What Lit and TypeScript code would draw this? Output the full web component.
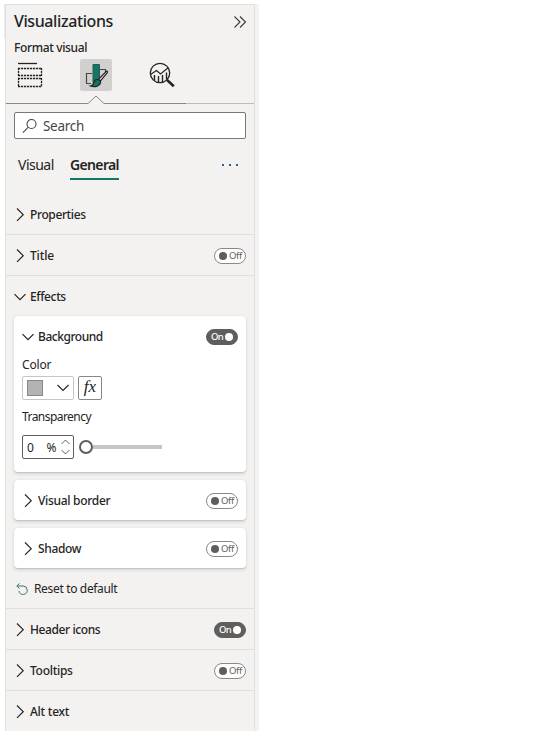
import { LitElement, html, css, svg, nothing } from "lit";
import { customElement, property } from "lit/decorators.js";

const base = css`
  :host { display: block; box-sizing: border-box; }
  * { box-sizing: border-box; }
  svg { display: block; fill: none; flex: none; }
`;

@customElement("toggle-pill")
class TogglePill extends LitElement {
  @property({ type: Boolean }) on = false;
  static styles = [base, css`
    :host { flex: none; }
    .pill {
      width: 32px; height: 16px; border-radius: 8px; border: 1px solid #8a8886;
      background: #fff; color: #605e5c; display: flex; align-items: center;
      padding: 0 3px 0 4px; gap: 2px; font-size: 9.5px; line-height: 14px;
      letter-spacing: -0.3px;
    }
    .dot { width: 8px; height: 8px; border-radius: 50%; background: #605e5c; flex: none; }
    .pill.on { background: #605e5c; border-color: #605e5c; color: #fff; font-weight: 550;
      flex-direction: row-reverse; justify-content: flex-start; padding: 0 4px 0 3px; gap: 2px; letter-spacing: -0.7px; }
    .on .dot { background: #fff; }
  `];
  render() {
    return html`<div class="pill ${this.on ? "on" : ""}"><span class="dot"></span><span>${this.on ? "On" : "Off"}</span></div>`;
  }
}

@customElement("section-row")
class SectionRow extends LitElement {
  @property() label = "";
  @property() toggle = "";
  @property({ type: Boolean }) open = false;
  @property() spacing = "0";
  static styles = [base, css`
    .row { display: flex; align-items: center; height: 40px; padding: 0 8px; }
    .chevron { width: 12px; margin-right: 4px; }
    .label { flex: 1; font-size: 12px; font-weight: 550; line-height: 16px; white-space: nowrap; }
  `];
  render() {
    return html`<div class="row">
      <svg class="chevron" width="12" height="14" viewBox="0 0 12 14" stroke="#252423" stroke-width="1.2">
        ${this.open ? svg`<path d="M.5 4.200 6 9.700l5.500-5.500"/>` : svg`<path d="M3 .500 9.200 6.700 3 12.900"/>`}
      </svg>
      <span class="label" style="letter-spacing:${this.spacing}px">${this.label}</span>
      ${this.toggle ? html`<toggle-pill ?on=${this.toggle === "on"}></toggle-pill>` : nothing}
    </div>`;
  }
}

@customElement("app-root")
class AppRoot extends LitElement {
  static styles = [base, css`
    :host {
      height: 735px; padding: 4px 0 0 5px; overflow: hidden;
      background: linear-gradient(#edebe9, #edebe9) 4px 4px / 1px 34px no-repeat #fff;
      font-family: "Noto Sans", "Open Sans", sans-serif; color: #252423;
    }
    .panel { width: 254px; height: 727px; background: #f3f2f1; overflow: hidden; }
    .pane { width: 250px; height: 727px; border: solid #e1dfdd; border-width: 1px 1px 0; }
    .head { display: flex; justify-content: space-between; align-items: center; height: 34px; padding: 0 7px 0 8px; }
    .head svg { margin-top: -1px; }
    .title { font-size: 16px; font-weight: 540; letter-spacing: -0.4px; margin-top: -2px; }
    .sub { height: 16px; margin: 0 8px; font-size: 12px; line-height: 18px; font-weight: 500; letter-spacing: -0.35px; }
    .modes { display: flex; height: 40px; padding-top: 4px; gap: 34px; margin-left: 8px; }
    .mode { width: 32px; height: 32px; }
    .mode.sel { background: #d2d0ce; border-radius: 2px; }
    .search {
      display: flex; align-items: center; gap: 5px; height: 27px; margin: 8px 8px 0; padding-left: 7px;
      background: #fff; border: 1px solid #7a7876; border-radius: 2px; font-size: 13.5px;
      color: #484644; letter-spacing: -0.3px;
    }
    .tabs { display: flex; height: 55px; padding: 16px 8px 0 12px; font-size: 14px; line-height: 20px; }
    .tab { height: 25px; letter-spacing: -0.5px; }
    .tab.visual { width: 52px; }
    .tab.sel { width: 49px; font-weight: 570; border-bottom: 2px solid #117865; letter-spacing: -0.65px; white-space: nowrap; }
    .more { margin: 9px 8px 0 auto; }
    .sec { height: 41px; border-bottom: 1px solid #e1dfdd; padding-top: 1px; }
    .sec.last { border: 0; }
    .effects { height: 333px; border-bottom: 1px solid #e1dfdd; }
    .effects-head { height: 40px; padding-top: 1px; }
    .card {
      height: 40px; margin: 0 8px 8px; background: #fff; border-radius: 4px;
      box-shadow: 0 1.6px 3.6px rgba(0,0,0,.13), 0 .3px .9px rgba(0,0,0,.1); padding-top: 1px;
    }
    .card.big { height: 156px; }
    .field { height: 16px; margin-left: 8px; font-size: 12px; line-height: 16px; letter-spacing: -0.55px; }
    .color-field { letter-spacing: -0.15px; }
    .controls { display: flex; align-items: center; gap: 4px; height: 24px; margin-left: 8px; }
    .picker { display: flex; align-items: center; justify-content: space-between; width: 52px; height: 24px; border: 1px solid #c8c6c4; border-radius: 2px; padding: 0 4px; }
    .swatch { width: 16px; height: 16px; background: #b3b3b3; border: 1px solid #8a8886; }
    .fx { width: 24px; height: 24px; border: 1px solid #8a8886; border-radius: 2px; font: italic 17px/20px "Liberation Serif", serif; text-align: center; }
    .color { margin: 3px 0 9px 8px; }
    .transparency { margin-top: 10px; }
    .spin { display: flex; align-items: center; width: 52px; height: 24px; border: 1px solid #605e5c; border-radius: 2px; padding-left: 4px; font-size: 12px; }
    .pct { margin: 0 5px 0 auto; letter-spacing: -.5px; }
    .arrows { margin-right: 3px; }
    .slider { display: flex; align-items: center; margin-left: 1px; }
    .thumb { width: 14px; height: 14px; border: 2px solid #605e5c; border-radius: 50%; background: #fff; }
    .track { width: 69px; height: 4px; background: #c8c6c4; }
    .reset { display: flex; align-items: center; gap: 6px; height: 25px; padding-left: 10px; font-size: 12px; letter-spacing: -0.34px; }
  `];

  render() {
    return html`<div class="panel"><div class="pane">
      <div class="head">
        <span class="title">Visualizations</span>
        <svg width="14" height="14" viewBox="0 0 14 14" stroke="#3b3a39" stroke-width="1.1"><path d="M1.500 1.500 7 7l-5.500 5.500M7 1.500 12.500 7 7 12.500"/></svg>
      </div>
      <div class="sub">Format visual</div>
      <div class="modes">
        <svg class="mode" viewBox="0 0 32 32" stroke="#252423">
          <path d="M4 4.500h19" stroke-width="1.300"/>
          <path stroke-width="1.300" stroke-dasharray="2.200 .8" d="M4 9.500h24M4 16.500h24M4 19.500h24M4 27.500h24M4.500 9v8M27.500 9v8M4.500 19v9M27.500 19v9"/>
        </svg>
        <svg class="mode sel" viewBox="0 0 32 32">
          <path d="M6.500 24.500v-10H12M6 24.500h5M20 10.500h5.500V13" stroke="#484644" stroke-width="1.200"/>
          <path d="M13 5.500h6.500V18l-4.500 5.500h-2z" fill="#117865" stroke="#2b5c52"/>
          <path d="M27.300 12.300c.6.500.2 1.100-.2 1.700l-6.600 8-2-1.700 7.300-7.400c.5-.6 1-1 1.500-.6z" fill="#e8e6e4" stroke="#252423" stroke-width="1.200"/>
          <path d="M17.200 20.500c1.900 0 3.700 1.500 3.400 3.200-.6 3.300-5.400 5-10.100 3.300 2-.4 2.700-1.300 3.200-3 .5-1.900 1.700-3.500 3.500-3.500z" fill="#117865" stroke="#252423" stroke-width="1.200"/>
        </svg>
        <svg class="mode" viewBox="0 0 32 32" stroke="#252423">
          <circle cx="14" cy="14" r="9.700" stroke-width="1.300"/>
          <path d="m4.500 15.500 6-4 4 3.500 8-6.500" stroke-width="1.200"/>
          <path d="M8.500 16v5.500M12.500 17v6M16.500 16v7M20.500 13.500v7" stroke-width="1.400"/>
          <path d="m20.800 20.800 7 6.500" stroke-width="2.600"/>
        </svg>
      </div>
      <svg width="248" height="9" viewBox="0 0 248 9">
        <path d="M180 8.500h68" stroke="#bebbb8"/>
        <path d="M0 8.500h82l8-7.500 8 7.500h82" stroke="#8a8886"/>
      </svg>
      <div class="search">
        <svg width="16" height="16" viewBox="0 0 16 16" stroke="#484644" stroke-width="1.100"><circle cx="9.500" cy="6" r="4.500"/><path d="M6.300 9.200.800 14.700"/></svg>
        <span>Search</span>
      </div>
      <div class="tabs">
        <div class="tab visual">Visual</div><div class="tab sel">General</div>
        <svg class="more" width="16" height="2" viewBox="0 0 16 2"><path fill="#2b6296" d="M0 0h2v2H0zM7 0h2v2H7zM14 0h2v2h-2z"/></svg>
      </div>
      <div class="sec"><section-row label="Properties" spacing="-0.38"></section-row></div>
      <div class="sec"><section-row label="Title" toggle="off" spacing="-0.15"></section-row></div>
      <div class="effects">
        <div class="effects-head"><section-row label="Effects" open spacing="-0.38"></section-row></div>
        <div class="card big">
          <section-row label="Background" toggle="on" open spacing="-0.47"></section-row>
          <div class="field color-field">Color</div>
          <div class="controls color">
            <div class="picker"><span class="swatch"></span><svg width="12" height="8" viewBox="0 0 12 8" stroke="#252423" stroke-width="1.100"><path d="m.500 1 5.500 5.500L11.500 1"/></svg></div>
            <div class="fx">fx</div>
          </div>
          <div class="field">Transparency</div>
          <div class="controls transparency">
            <div class="spin"><span>0</span><span class="pct">%</span>
              <svg class="arrows" width="9" height="16" viewBox="0 0 9 16" stroke="#605e5c"><path d="M.500 5 4.500 1l4 4M.500 11l4 4 4-4"/></svg></div>
            <div class="slider"><span class="thumb"></span><span class="track"></span></div>
          </div>
        </div>
        <div class="card"><section-row label="Visual border" toggle="off" spacing="-0.3"></section-row></div>
        <div class="card"><section-row label="Shadow" toggle="off" spacing="-0.35"></section-row></div>
        <div class="reset">
          <svg width="12" height="12" viewBox="0 0 12 12" stroke="#3f746a"><path d="M3.500.500.800 3l2.700 2.500M1 3h6a4.200 4.200 0 1 1-4.100 5"/></svg>
          <span>Reset to default</span>
        </div>
      </div>
      <div class="sec"><section-row label="Header icons" toggle="on" spacing="-0.4"></section-row></div>
      <div class="sec"><section-row label="Tooltips" toggle="off" spacing="-0.28"></section-row></div>
      <div class="sec last"><section-row label="Alt text" spacing="-0.25"></section-row></div>
    </div></div>`;
  }
}
